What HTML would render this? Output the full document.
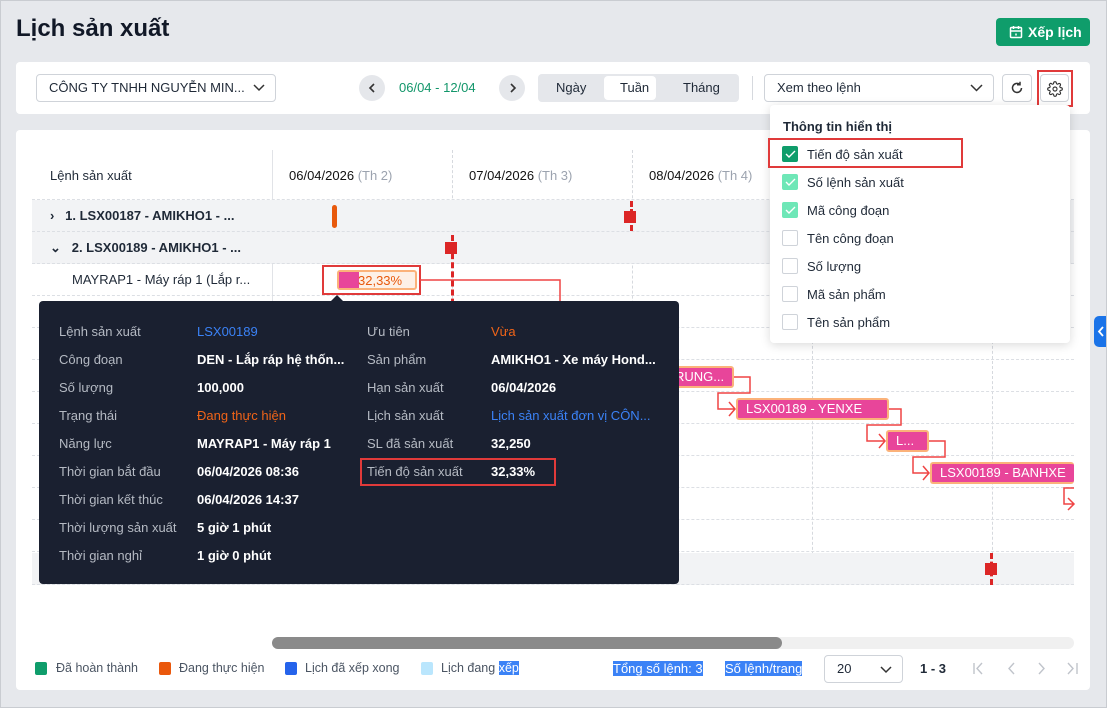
<!DOCTYPE html>
<html><head><meta charset="utf-8">
<style>
*{box-sizing:border-box;margin:0;padding:0}
body{width:1107px;height:708px;overflow:hidden;background:#e6e8ec;font-family:"Liberation Sans",sans-serif;color:#1f2937;position:relative;font-size:13px}
.a{position:absolute}
.frame{position:absolute;left:0;top:0;width:1107px;height:708px;border:1px solid #c9ccd1;pointer-events:none}
.card{background:#fff;border-radius:4px}
.row{position:absolute;left:32px;width:1042px;height:32px;border-bottom:1px dashed #dcdfe4}
.g{background:#f2f3f5}
.lbl{position:absolute;left:0;top:0;line-height:32px;font-size:13px}
.vl{position:absolute;top:150px;height:435px;border-left:1px dashed #d6d9de}
.bar{position:absolute;height:22px;background:#e8459a;border:2px solid #fbb27a;border-radius:3px;color:#fff;font-size:13px;line-height:18px;padding-left:8px;white-space:nowrap;overflow:hidden}
.tt td{height:28px;font-size:13px;white-space:nowrap}
.k{color:#b5bac3}
.v{color:#fff;font-weight:bold}
.cb{position:absolute;left:782px;width:16px;height:16px;border:1px solid #cfd3d9;border-radius:2px;background:#fff}
.ci{position:absolute;left:807px;font-size:13px;color:#1f2937}
.redbox{position:absolute;border:2px solid #e03a3a}
</style></head><body>
<div class="a" style="left:16px;top:15px;font-size:24px;font-weight:bold;color:#111827">Lịch sản xuất</div>
<div class="a" style="left:996px;top:18px;width:94px;height:28px;background:#0f9d6b;border-radius:4px;color:#fff;font-weight:bold;font-size:14px;line-height:28px;padding-left:32px">Xếp lịch
<svg class="a" style="left:13px;top:7px" width="14" height="14" viewBox="0 0 14 14" fill="none" stroke="#fff" stroke-width="1.5"><rect x="1.5" y="2.5" width="11" height="10" rx="1"/><path d="M1.5 6h11M4.5 1v3M9.5 1v3M7 8.5v2"/></svg></div>

<div class="a card" style="left:16px;top:62px;width:1074px;height:52px"></div>
<div class="a" style="left:36px;top:74px;width:240px;height:28px;border:1px solid #cfd3d9;border-radius:4px;font-size:13px;line-height:26px;padding-left:12px;color:#1f2937">CÔNG TY TNHH NGUYỄN MIN...
<svg class="a" style="left:216px;top:9px" width="12" height="8" viewBox="0 0 12 8" fill="none" stroke="#333" stroke-width="1.5"><path d="M1 1l5 5 5-5"/></svg></div>
<div class="a" style="left:359px;top:75px;width:26px;height:26px;border-radius:50%;background:#e5e7eb"><svg class="a" style="left:9px;top:8px" width="8" height="10" viewBox="0 0 8 10" fill="none" stroke="#333" stroke-width="1.6"><path d="M6 1L2 5l4 4"/></svg></div>
<div class="a" style="left:399px;top:80px;color:#12966a;font-size:13px">06/04 - 12/04</div>
<div class="a" style="left:499px;top:75px;width:26px;height:26px;border-radius:50%;background:#e5e7eb"><svg class="a" style="left:10px;top:8px" width="8" height="10" viewBox="0 0 8 10" fill="none" stroke="#333" stroke-width="1.6"><path d="M2 1l4 4-4 4"/></svg></div>
<div class="a" style="left:538px;top:74px;width:201px;height:28px;background:#e5e7eb;border-radius:4px"></div>
<div class="a" style="left:604px;top:76px;width:52px;height:24px;background:#fff;border-radius:4px"></div>
<div class="a" style="left:556px;top:80px">Ngày</div>
<div class="a" style="left:620px;top:80px">Tuần</div>
<div class="a" style="left:683px;top:80px">Tháng</div>
<div class="a" style="left:752px;top:76px;width:1px;height:24px;background:#d6d9de"></div>
<div class="a" style="left:764px;top:74px;width:230px;height:28px;border:1px solid #cfd3d9;border-radius:4px;line-height:26px;padding-left:12px">Xem theo lệnh
<svg class="a" style="left:205px;top:9px" width="13" height="8" viewBox="0 0 13 8" fill="none" stroke="#333" stroke-width="1.5"><path d="M1 1l5.5 5.5L12 1"/></svg></div>
<div class="a" style="left:1002px;top:74px;width:30px;height:28px;border:1px solid #cfd3d9;border-radius:4px"><svg class="a" style="left:7px;top:6px" width="14" height="14" viewBox="0 0 14 14" fill="none" stroke="#333" stroke-width="1.5"><path d="M11.5 7A4.5 4.5 0 1 1 9.8 3.4"/><path d="M10 0.8v3h-3" /></svg></div>
<div class="a" style="left:1040px;top:74px;width:29px;height:28px;border:1px solid #cfd3d9;border-radius:4px"><svg class="a" style="left:6px;top:6px" width="16" height="16" viewBox="0 0 24 24" fill="none" stroke="#333" stroke-width="1.7"><circle cx="12" cy="12" r="3"/><path d="M19.4 15a1.65 1.65 0 0 0 .33 1.82l.06.06a2 2 0 1 1-2.830 2.83l-.06-.06a1.65 1.65 0 0 0-1.82-.33 1.65 1.65 0 0 0-1 1.51V21a2 2 0 1 1-4 0v-.09A1.65 1.65 0 0 0 9 19.4a1.65 1.65 0 0 0-1.82.33l-.06.06a2 2 0 1 1-2.83-2.83l.06-.06a1.65 1.65 0 0 0 .33-1.82 1.65 1.65 0 0 0-1.51-1H3a2 2 0 1 1 0-4h.09A1.65 1.65 0 0 0 4.6 9a1.65 1.65 0 0 0-.33-1.82l-.06-.06a2 2 0 1 1 2.83-2.83l.06.06a1.65 1.65 0 0 0 1.82.33H9a1.65 1.65 0 0 0 1-1.51V3a2 2 0 1 1 4 0v.09a1.650 1.65 0 0 0 1 1.51 1.65 1.65 0 0 0 1.820-.33l.06-.06a2 2 0 1 1 2.83 2.83l-.06.06a1.65 1.65 0 0 0-.33 1.82V9a1.65 1.65 0 0 0 1.51 1H21a2 2 0 1 1 0 4h-.09a1.65 1.65 0 0 0-1.51 1z"/></svg></div>
<div class="redbox" style="left:1037px;top:70px;width:36px;height:37px"></div>

<div class="a card" style="left:16px;top:130px;width:1074px;height:560px"></div>
<div class="a" style="left:50px;top:168px">Lệnh sản xuất</div>
<div class="a" style="left:272px;top:150px;height:435px;border-left:1px solid #e1e3e7"></div>
<div class="vl" style="left:452px"></div><div class="vl" style="left:632px"></div><div class="vl" style="left:812px"></div><div class="vl" style="left:992px"></div>
<div class="a" style="left:289px;top:168px;color:#111">06/04/2026 <span style="color:#9ca3af">(Th 2)</span></div>
<div class="a" style="left:469px;top:168px;color:#111">07/04/2026 <span style="color:#9ca3af">(Th 3)</span></div>
<div class="a" style="left:649px;top:168px;color:#111">08/04/2026 <span style="color:#9ca3af">(Th 4)</span></div>
<div class="a" style="left:32px;top:199px;width:1042px;border-top:1px dashed #dcdfe4"></div>

<div class="row g" style="top:200px"><div class="lbl" style="left:18px;font-weight:bold">›&nbsp;&nbsp; 1. LSX00187 - AMIKHO1 - ...</div></div>
<div class="row g" style="top:232px"><div class="lbl" style="left:18px;font-weight:bold">⌄&nbsp;&nbsp; 2. LSX00189 - AMIKHO1 - ...</div></div>
<div class="row" style="top:264px"><div class="lbl" style="left:40px">MAYRAP1 - Máy ráp 1 (Lắp r...</div></div>
<div class="row" style="top:296px"></div><div class="row" style="top:328px"></div><div class="row" style="top:360px"></div>
<div class="row" style="top:392px"></div><div class="row" style="top:424px"></div><div class="row" style="top:456px"></div>
<div class="row" style="top:488px"></div><div class="row" style="top:520px"></div>
<div class="row g" style="top:553px"></div>

<div class="a" style="left:332px;top:205px;width:5px;height:23px;background:#e8590c;border-radius:3px"></div>
<div class="a" style="left:451px;top:235px;height:315px;border-left:3px dashed #dc2626"></div>
<div class="a" style="left:445px;top:242px;width:12px;height:12px;background:#dc2626"></div>
<div class="a" style="left:630px;top:201px;height:30px;border-left:3px dashed #dc2626"></div>
<div class="a" style="left:624px;top:211px;width:12px;height:12px;background:#dc2626"></div>
<div class="a" style="left:990px;top:553px;height:32px;border-left:3px dashed #dc2626"></div>
<div class="a" style="left:985px;top:563px;width:12px;height:12px;background:#dc2626"></div>

<div class="a" style="left:337px;top:270px;width:80px;height:20px;background:#fdf0e6;border:2px solid #fbb27a;border-radius:3px"></div>
<div class="a" style="left:339px;top:272px;width:20px;height:16px;background:#e8459a"></div>
<div class="a" style="left:358px;top:273px;color:#e8590c;font-size:13px">32,33%</div>
<div class="redbox" style="left:322px;top:265px;width:99px;height:30px"></div>
<svg class="a" style="left:0;top:0" width="1107" height="708" fill="none" stroke="#ef4444" stroke-width="1.5">
<path d="M420 280H560V305"/>
<path d="M733 377H750V393H718V409H735M729 402l6 7-6 7"/>
<path d="M888 409H901V425H867V441H885M879 434l6 7-6 7"/>
<path d="M928 441H945V457H913V473H929M923 466l6 7-6 7"/>
<path d="M1074 488H1064V504H1074M1068 498l6 6-6 6"/>
</svg>
<div class="bar" style="left:585px;top:366px;width:149px">LSX00189 - TRUNG...</div>
<div class="bar" style="left:736px;top:398px;width:153px">LSX00189 - YENXE</div>
<div class="bar" style="left:886px;top:430px;width:43px">L...</div>
<div class="bar" style="left:930px;top:462px;width:144px;border-right:none">LSX00189 - BANHXE</div>

<div class="a" style="left:39px;top:301px;width:640px;height:283px;background:#1a2030;border-radius:4px"></div>
<div class="a" style="left:331px;top:295px;width:0;height:0;border-left:6px solid transparent;border-right:6px solid transparent;border-bottom:6px solid #1a2030"></div>
<table class="a tt" style="left:59px;top:317px;border-collapse:collapse">
<tr><td class="k" style="width:138px">Lệnh sản xuất</td><td style="color:#3b82f6">LSX00189</td></tr>
<tr><td class="k">Công đoạn</td><td class="v">DEN - Lắp ráp hệ thốn...</td></tr>
<tr><td class="k">Số lượng</td><td class="v">100,000</td></tr>
<tr><td class="k">Trạng thái</td><td style="color:#f06418">Đang thực hiện</td></tr>
<tr><td class="k">Năng lực</td><td class="v">MAYRAP1 - Máy ráp 1</td></tr>
<tr><td class="k">Thời gian bắt đầu</td><td class="v">06/04/2026 08:36</td></tr>
<tr><td class="k">Thời gian kết thúc</td><td class="v">06/04/2026 14:37</td></tr>
<tr><td class="k">Thời lượng sản xuất</td><td class="v">5 giờ 1 phút</td></tr>
<tr><td class="k">Thời gian nghỉ</td><td class="v">1 giờ 0 phút</td></tr>
</table>
<table class="a tt" style="left:367px;top:317px;border-collapse:collapse">
<tr><td class="k" style="width:124px">Ưu tiên</td><td style="color:#f06418">Vừa</td></tr>
<tr><td class="k">Sản phẩm</td><td class="v">AMIKHO1 - Xe máy Hond...</td></tr>
<tr><td class="k">Hạn sản xuất</td><td class="v">06/04/2026</td></tr>
<tr><td class="k">Lịch sản xuất</td><td style="color:#3b82f6">Lịch sản xuất đơn vị CÔN...</td></tr>
<tr><td class="k">SL đã sản xuất</td><td class="v">32,250</td></tr>
<tr><td class="k">Tiến độ sản xuất</td><td class="v">32,33%</td></tr>
</table>
<div class="redbox" style="left:360px;top:458px;width:196px;height:28px"></div>

<div class="a" style="left:770px;top:105px;width:300px;height:238px;background:#fff;border-radius:4px;box-shadow:0 2px 10px rgba(0,0,0,.15)"></div>
<div class="a" style="left:783px;top:119px;font-weight:bold;font-size:13px">Thông tin hiển thị</div>
<div class="cb" style="top:146px;background:#0f9d6b;border-color:#0f9d6b"></div>
<div class="cb" style="top:174px;background:#6ee7b7;border-color:#6ee7b7"></div>
<div class="cb" style="top:202px;background:#6ee7b7;border-color:#6ee7b7"></div>
<div class="cb" style="top:230px"></div><div class="cb" style="top:258px"></div><div class="cb" style="top:286px"></div><div class="cb" style="top:314px"></div>
<svg class="a" style="left:785px;top:149px" width="11" height="95" fill="none" stroke="#fff" stroke-width="1.4"><path d="M1 5l3 3 6-6M1 33l3 3 6-6M1 61l3 3 6-6"/></svg>
<div class="ci" style="top:147px">Tiến độ sản xuất</div>
<div class="ci" style="top:175px">Số lệnh sản xuất</div>
<div class="ci" style="top:203px">Mã công đoạn</div>
<div class="ci" style="top:231px">Tên công đoạn</div>
<div class="ci" style="top:259px">Số lượng</div>
<div class="ci" style="top:287px">Mã sản phẩm</div>
<div class="ci" style="top:315px">Tên sản phẩm</div>
<div class="redbox" style="left:768px;top:138px;width:195px;height:30px"></div>
<div class="a" style="left:1094px;top:316px;width:13px;height:31px;background:#1a73e8;border-radius:5px 0 0 5px"><svg class="a" style="left:3px;top:10px" width="7" height="11" fill="none" stroke="#fff" stroke-width="1.8"><path d="M6 1L2 5.5 6 10"/></svg></div>

<div class="a" style="left:272px;top:637px;width:802px;height:12px;background:#f0f0f0;border-radius:6px"></div>
<div class="a" style="left:272px;top:637px;width:510px;height:12px;background:#8a8a8a;border-radius:6px"></div>

<div class="a" style="left:35px;top:662px;width:12px;height:13px;background:#0f9d6b;border-radius:2px"></div>
<div class="a" style="left:56px;top:661px;font-size:12.5px;color:#4b5563">Đã hoàn thành</div>
<div class="a" style="left:159px;top:662px;width:12px;height:13px;background:#ea580c;border-radius:2px"></div>
<div class="a" style="left:179px;top:661px;font-size:12.5px;color:#4b5563">Đang thực hiện</div>
<div class="a" style="left:285px;top:662px;width:12px;height:13px;background:#2563eb;border-radius:2px"></div>
<div class="a" style="left:305px;top:661px;font-size:12.5px;color:#4b5563">Lịch đã xếp xong</div>
<div class="a" style="left:421px;top:662px;width:12px;height:13px;background:#bae6fd;border-radius:2px"></div>
<div class="a" style="left:441px;top:661px;font-size:12.5px;color:#4b5563">Lịch đang <span style="background:#3b82f6;color:#fff">xếp</span></div>
<div class="a" style="left:613px;top:661px;font-size:13px;background:#3b82f6;color:#fff">Tổng số lệnh: 3</div>
<div class="a" style="left:725px;top:661px;font-size:13px;background:#3b82f6;color:#fff">Số lệnh/trang</div>
<div class="a" style="left:824px;top:655px;width:79px;height:28px;border:1px solid #cfd3d9;border-radius:4px;line-height:26px;padding-left:12px">20
<svg class="a" style="left:55px;top:10px" width="12" height="8" fill="none" stroke="#333" stroke-width="1.5"><path d="M1 1l5 5 5-5"/></svg></div>
<div class="a" style="left:920px;top:661px;font-weight:bold">1 - 3</div>
<svg class="a" style="left:972px;top:662px" width="110" height="14" fill="none" stroke="#c0c4cb" stroke-width="1.4"><path d="M2 1v11M10 1L5 6.5 10 12M42 1L37 6.5 42 12M67 1l5 5.5-5 5.5M96 1l5 5.5-5 5.5M105 1v11"/></svg>
<div class="frame"></div>
</body></html>
